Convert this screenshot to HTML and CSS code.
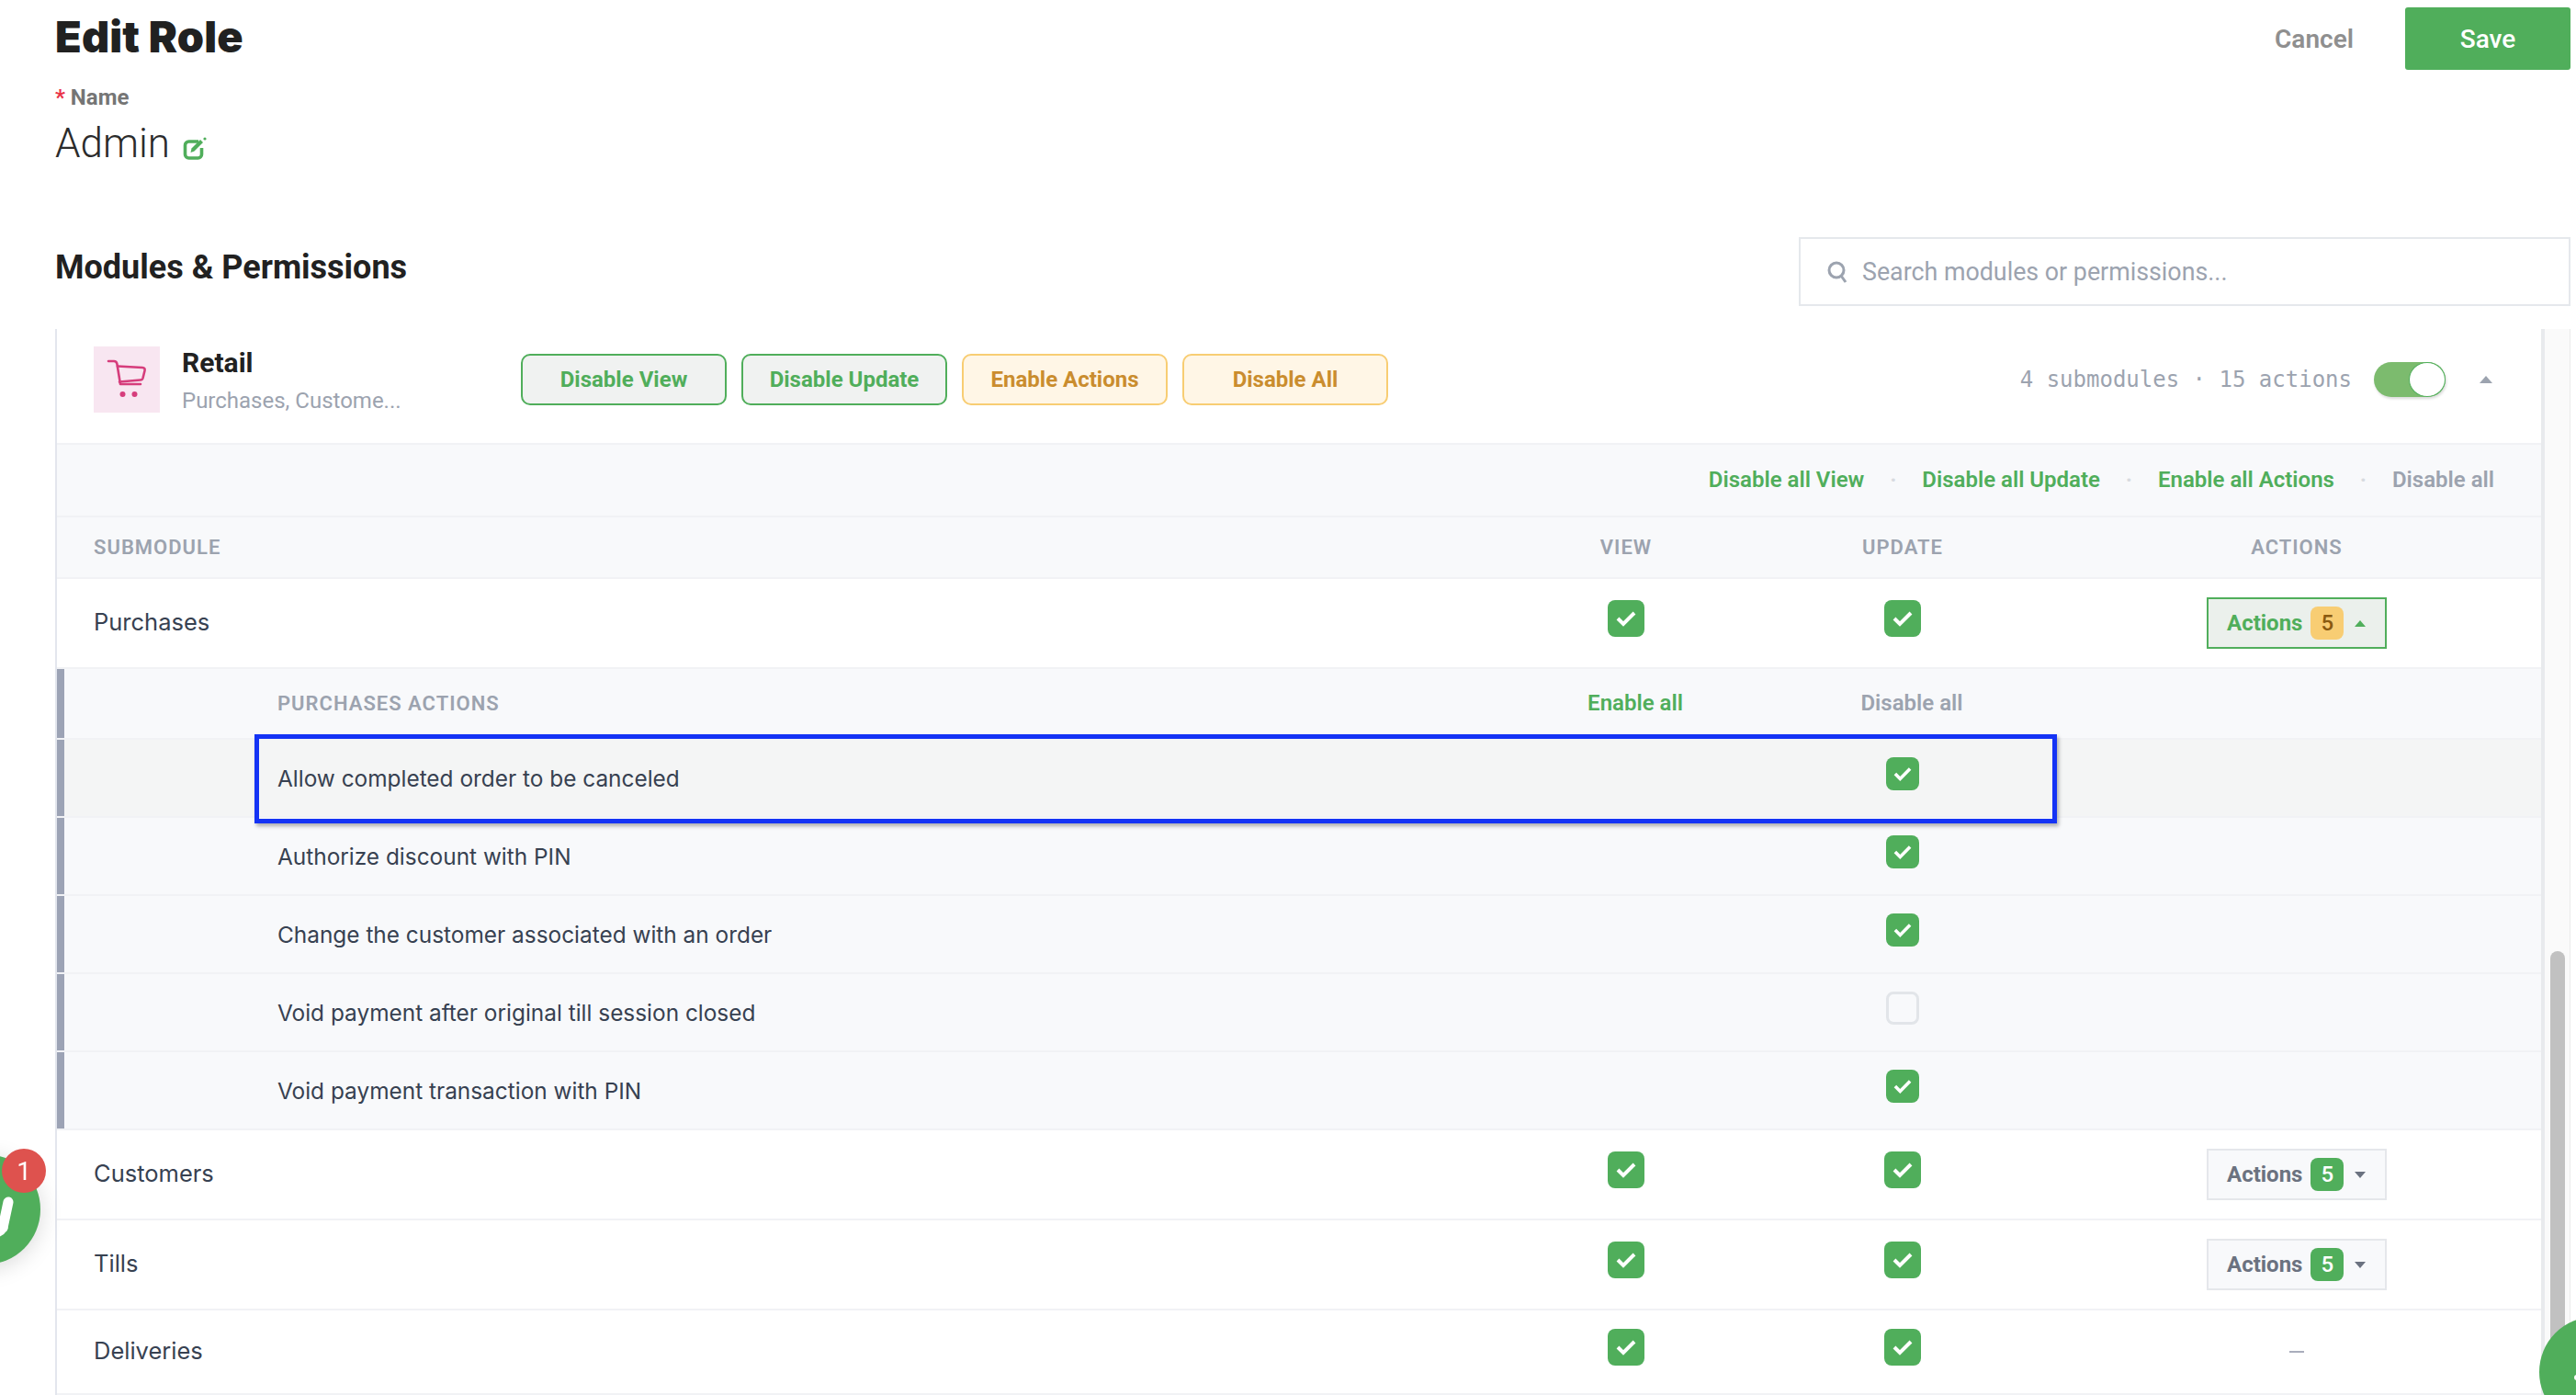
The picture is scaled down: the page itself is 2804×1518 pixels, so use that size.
FILE: index.html
```html
<!DOCTYPE html>
<html lang="en">
<head>
<meta charset="utf-8">
<title>Edit Role</title>
<link rel="stylesheet" href="styles.css">
</head>
<body>
<div class="page">
  <header class="top">
    <h1 class="title">Edit Role</h1>
    <div class="top-actions">
      <button class="cancel">Cancel</button>
      <button class="save">Save</button>
    </div>
  </header>
  <section class="name-block">
    <div class="name-label"><span class="req">*</span> Name</div>
    <div class="name-value">Admin
      <svg class="edit-icon" width="26" height="25" viewBox="0 0 26 25" fill="none"><path d="M17 5H6.500A4 4 0 0 0 2.500 9v10a4 4 0 0 0 4 4h10a4 4 0 0 0 4-4V12" stroke="#50ae5b" stroke-width="3.600"/><path d="M8.500 17l1-4.500L19 3l3 3-9.500 9.500z" fill="#50ae5b"/><circle cx="24" cy="2" r="1.600" fill="#50ae5b"/></svg>
    </div>
  </section>
  <section class="section-head">
    <h2 class="section-title">Modules &amp; Permissions</h2>
    <div class="search">
      <svg width="24" height="26" viewBox="0 0 24 26" fill="none" stroke="#9ca3af" stroke-width="3"><circle cx="11" cy="11" r="8"/><path d="M16 17l5 7"/></svg>
      <span>Search modules or permissions...</span>
    </div>
  </section>
  <div class="scroller">
    <main class="module">
      <div class="mod-head">
        <div class="mod-icon">
          <svg width="44" height="44" viewBox="0 0 44 44" fill="none" stroke="#d63d7c" stroke-width="2.600" stroke-linecap="round" stroke-linejoin="round"><path d="M2 2h6c2 0 3 1 3.400 3L15 27h22"/><path d="M12 7.500l27 1.500c2.300.2 3 1.500 2.500 3.500l-2 8c-.4 1.400-1.300 2-2.700 2L14 24.500"/><circle cx="17.500" cy="38" r="3" fill="#d63d7c" stroke="none"/><circle cx="30.500" cy="38" r="3" fill="#d63d7c" stroke="none"/></svg>
        </div>
        <div class="mod-info">
          <div class="mod-name">Retail</div>
          <div class="mod-sub">Purchases, Custome...</div>
        </div>
        <div class="mod-btns">
          <button class="pill green">Disable View</button>
          <button class="pill green">Disable Update</button>
          <button class="pill amber">Enable Actions</button>
          <button class="pill amber">Disable All</button>
        </div>
        <div class="mod-right">
          <span class="mod-count">4 submodules · 15 actions</span>
          <span class="toggle"><span class="knob"></span></span>
          <span class="caret up gray"></span>
        </div>
      </div>

      <div class="bulk">
        <span class="g">Disable all View</span><span class="dot">·</span>
        <span class="g">Disable all Update</span><span class="dot">·</span>
        <span class="g">Enable all Actions</span><span class="dot">·</span>
        <span class="m">Disable all</span>
      </div>

      <div class="grid col-head">
        <div class="c-name">SUBMODULE</div><div class="c">VIEW</div><div class="c">UPDATE</div><div class="c">ACTIONS</div>
      </div>

      <div class="grid row">
        <div class="c-name">Purchases</div>
        <div class="c"><span class="cb on"><svg width="24" height="20" viewBox="0 0 24 20"><path d="M3 10l6 6L21 4" fill="none" stroke="#fff" stroke-width="4"/></svg></span></div>
        <div class="c"><span class="cb on"><svg width="24" height="20" viewBox="0 0 24 20"><path d="M3 10l6 6L21 4" fill="none" stroke="#fff" stroke-width="4"/></svg></span></div>
        <div class="c"><button class="act open">Actions <span class="badge amber-b">5</span><span class="caret up greenc"></span></button></div>
      </div>

      <div class="grid sub-head">
        <div class="c-sub"><span class="bar"></span><span class="sh-label">PURCHASES ACTIONS</span></div>
        <div class="c shift g">Enable all</div>
        <div class="c shift m">Disable all</div>
        <div class="c"></div>
      </div>

      <div class="grid sub active">
        <div class="c-sub"><span class="bar"></span><span class="sub-label">Allow completed order to be canceled</span></div>
        <div class="c"></div>
        <div class="c"><span class="cb small on"><svg width="22" height="18" viewBox="0 0 24 20"><path d="M3 10l6 6L21 4" fill="none" stroke="#fff" stroke-width="4"/></svg></span></div>
        <div class="c"></div>
        <div class="highlight"></div>
      </div>
      <div class="grid sub">
        <div class="c-sub"><span class="bar"></span><span class="sub-label">Authorize discount with PIN</span></div>
        <div class="c"></div>
        <div class="c"><span class="cb small on"><svg width="22" height="18" viewBox="0 0 24 20"><path d="M3 10l6 6L21 4" fill="none" stroke="#fff" stroke-width="4"/></svg></span></div>
        <div class="c"></div>
      </div>
      <div class="grid sub">
        <div class="c-sub"><span class="bar"></span><span class="sub-label">Change the customer associated with an order</span></div>
        <div class="c"></div>
        <div class="c"><span class="cb small on"><svg width="22" height="18" viewBox="0 0 24 20"><path d="M3 10l6 6L21 4" fill="none" stroke="#fff" stroke-width="4"/></svg></span></div>
        <div class="c"></div>
      </div>
      <div class="grid sub">
        <div class="c-sub"><span class="bar"></span><span class="sub-label">Void payment after original till session closed</span></div>
        <div class="c"></div>
        <div class="c"><span class="cb small off"></span></div>
        <div class="c"></div>
      </div>
      <div class="grid sub">
        <div class="c-sub"><span class="bar"></span><span class="sub-label">Void payment transaction with PIN</span></div>
        <div class="c"></div>
        <div class="c"><span class="cb small on"><svg width="22" height="18" viewBox="0 0 24 20"><path d="M3 10l6 6L21 4" fill="none" stroke="#fff" stroke-width="4"/></svg></span></div>
        <div class="c"></div>
      </div>

      <div class="grid row">
        <div class="c-name">Customers</div>
        <div class="c"><span class="cb on"><svg width="24" height="20" viewBox="0 0 24 20"><path d="M3 10l6 6L21 4" fill="none" stroke="#fff" stroke-width="4"/></svg></span></div>
        <div class="c"><span class="cb on"><svg width="24" height="20" viewBox="0 0 24 20"><path d="M3 10l6 6L21 4" fill="none" stroke="#fff" stroke-width="4"/></svg></span></div>
        <div class="c"><button class="act">Actions <span class="badge">5</span><span class="caret down"></span></button></div>
      </div>
      <div class="grid row">
        <div class="c-name">Tills</div>
        <div class="c"><span class="cb on"><svg width="24" height="20" viewBox="0 0 24 20"><path d="M3 10l6 6L21 4" fill="none" stroke="#fff" stroke-width="4"/></svg></span></div>
        <div class="c"><span class="cb on"><svg width="24" height="20" viewBox="0 0 24 20"><path d="M3 10l6 6L21 4" fill="none" stroke="#fff" stroke-width="4"/></svg></span></div>
        <div class="c"><button class="act">Actions <span class="badge">5</span><span class="caret down"></span></button></div>
      </div>
      <div class="grid row short">
        <div class="c-name">Deliveries</div>
        <div class="c"><span class="cb on"><svg width="24" height="20" viewBox="0 0 24 20"><path d="M3 10l6 6L21 4" fill="none" stroke="#fff" stroke-width="4"/></svg></span></div>
        <div class="c"><span class="cb on"><svg width="24" height="20" viewBox="0 0 24 20"><path d="M3 10l6 6L21 4" fill="none" stroke="#fff" stroke-width="4"/></svg></span></div>
        <div class="c"><span class="dash"></span></div>
      </div>
    </main>
    <div class="track"><div class="thumb"></div></div>
  </div>
</div>

<div class="chat">
  <svg width="60" height="120" viewBox="0 0 60 120" fill="none"><path d="M25 52l-6 28" stroke="#fff" stroke-width="11" stroke-linecap="round"/><path d="M4 86c7 0 12-1 15-6" stroke="#fff" stroke-width="11" stroke-linecap="round"/></svg>
</div>
<div class="chat-badge">1</div>
<div class="help"><span class="help-dot"></span></div>
</body>
</html>
```
FILE: styles.css
```css
* { box-sizing: border-box; }
html, body { margin: 0; padding: 0; height: 100%; overflow: hidden; background: #fff; }
body { font-family: Roboto, "Liberation Sans", sans-serif; color: #222; }
button { font-family: inherit; cursor: pointer; }

.page { width: 2804px; height: 1518px; padding: 0 6px 0 60px; display: flex; flex-direction: column; overflow: hidden; }

.top { height: 84px; flex: none; display: flex; justify-content: space-between; align-items: flex-start; }
.title { margin: 0; font-family: Inter, sans-serif; font-weight: 900; font-size: 46.800px; line-height: 80px; letter-spacing: 0.2px; color: #212121; }
.top-actions { display: flex; align-items: center; gap: 56px; padding-top: 8px; }
.cancel { border: 0; background: none; padding: 0; font-size: 28px; font-weight: 600; color: #8f8f8f; }
.save { width: 180px; height: 68px; border: 0; border-radius: 3px; background: #50ae5b; color: #fff; font-size: 28px; font-weight: 500; }

.name-block { height: 174px; flex: none; padding-top: 8px; }
.name-label { font-size: 24px; line-height: 28px; font-weight: 700; color: #757575; }
.req { color: #ea3348; }
.name-value { margin-top: 2px; font-size: 44px; line-height: 68px; font-weight: 300; color: #2b2b2b; display: flex; align-items: center; gap: 14px; }
.edit-icon { margin-top: 10px; }

.section-head { height: 100px; flex: none; display: flex; justify-content: space-between; align-items: flex-start; }
.section-title { margin: 9px 0 0; font-size: 36px; line-height: 48px; font-weight: 700; color: #212121; }
.search { width: 840px; height: 75px; border: 2px solid #e5e8ec; padding-left: 28px; display: flex; align-items: center; gap: 15px; font-size: 26.800px; color: #9ca3af; }

.scroller { flex: 1; min-height: 0; display: flex; overflow: hidden; }
.module { width: 2710px; flex: none; border-left: 2px solid #e3e6ed; border-right: 4px solid #e8eaed; position: relative; font-size: 26px; }
.track { width: 28px; flex: none; background: #fafafa; border-right: 1px solid #ebebeb; padding: 677px 5px 0 6px; }
.thumb { height: 600px; border-radius: 8px 8px 0 0; background: #c1c1c1; }

.mod-head { height: 126px; padding: 0 53px 14px 40px; display: flex; align-items: center; border-bottom: 2px solid #f1f2f5; }
.mod-icon { width: 72px; height: 72px; flex: none; background: #f8e6f1; display: flex; align-items: center; justify-content: center; }
.mod-info { width: 393px; flex: none; padding: 2px 0 0 24px; }
.mod-name { font-size: 30px; line-height: 36px; font-weight: 700; color: #212121; }
.mod-sub { margin-top: 8px; font-size: 24px; line-height: 30px; color: #9ca3af; }
.mod-btns { display: flex; gap: 16px; }
.pill { width: 224px; height: 56px; border-radius: 10px; border: 2px solid; font-size: 24px; font-weight: 700; }
.pill.green { background: #f0f2f1; border-color: #50ae5b; color: #50ae5b; }
.pill.amber { background: #fff6e6; border-color: #f8cd73; color: #ca8d2e; }
.mod-right { margin-left: auto; display: flex; align-items: center; }
.mod-count { font-family: "DejaVu Sans Mono", monospace; font-size: 24px; color: #9ca3af; margin-right: 24px; }
.toggle { width: 78px; height: 38px; border-radius: 19px; background: #7cbb6e; display: flex; justify-content: flex-end; margin-right: 37px; box-shadow: 1px 2px 3px rgba(0,0,0,.15); }
.knob { width: 40px; height: 38px; border-radius: 50%; background: #fff; border: 1px solid #50ae5b; }

.caret { display: inline-block; width: 0; height: 0; border-left: 6px solid transparent; border-right: 6px solid transparent; }
.caret.up { border-bottom: 7px solid #6b7280; }
.caret.up.gray { border-left-width: 7px; border-right-width: 7px; border-bottom: 8px solid #9ca3af; }
.caret.up.greenc { border-bottom-color: #50ae5b; }
.caret.down { border-top: 7px solid #6b7280; }

.bulk { height: 79px; padding: 0 51px 2px 0; background: #f8f9fb; border-bottom: 2px solid #f1f2f5; display: flex; justify-content: flex-end; align-items: center; font-size: 24px; font-weight: 600; }
.g { color: #50ae5b; }
.m { color: #9ca3af; }
.dot { width: 63px; text-align: center; color: #d8dbe0; font-weight: 700; }

.grid { display: grid; grid-template-columns: 1570px 276px 326px 532px; align-items: center; position: relative; }
.c { display: flex; justify-content: center; align-items: center; }
.c-name { padding-left: 40px; }

.col-head { height: 67px; background: #f8f9fb; border-bottom: 2px solid #f1f2f5; font-size: 22px; font-weight: 600; letter-spacing: 1px; color: #9ca3af; }

.row { height: 98px; background: #fff; border-bottom: 2px solid #f1f2f5; color: #374151; }
.row .c-name { font-family: Inter, sans-serif; font-size: 25.500px; margin-top: -4px; }
.row.short { height: 92px; }

.cb { display: flex; align-items: center; justify-content: center; width: 40px; height: 40px; border-radius: 8px; margin-bottom: 10px; }
.cb.small { width: 36px; height: 36px; }
.cb.on { background: #50ae5b; }
.cb.off { border: 3px solid #e2e5e9; background: #f8f9fb; }

.act { width: 196px; height: 56px; padding: 0 0 0 20px; display: flex; align-items: center; justify-content: flex-start; background: #f8f9fb; border: 2px solid #e5e7eb; font-size: 24px; font-weight: 700; color: #6b7280; }
.act.open { background: #ebf0ec; border-color: #50ae5b; color: #50ae5b; font-weight: 700; }
.badge { width: 36px; height: 36px; margin: 0 12px 0 9px; border-radius: 8px; background: #50ae5b; color: #fff; font-weight: 500; display: flex; align-items: center; justify-content: center; }
.badge.amber-b { background: #f8cd73; color: #8a5a10; }
.dash { width: 16px; height: 2px; background: #a9adbc; }

.sub-head { height: 77px; background: #f8f9fb; border-bottom: 2px solid #f1f2f5; font-size: 24px; font-weight: 600; }
.sub { height: 85px; background: #f8f9fb; border-bottom: 2px solid #f1f2f5; }
.sub.active { background: #f4f5f5; }
.c-sub { height: 100%; display: flex; align-items: center; position: relative; padding-left: 240px; }
.bar { position: absolute; left: 0; top: 0; bottom: 0; width: 8px; background: #9ca3b5; }
.sh-label { font-size: 22px; font-weight: 600; letter-spacing: 1px; color: #9ca3af; }
.sub-label { font-family: Inter, sans-serif; font-size: 24.400px; color: #374151; }
.shift { padding-left: 20px; margin-top: -2px; }

.highlight { position: absolute; z-index: 3; left: 215px; top: -6px; width: 1962px; height: 97px; border: 5px solid #1433f5; box-shadow: 2px 3px 4px rgba(0,0,0,.3); }

.chat { position: fixed; left: -76px; top: 1256px; width: 120px; height: 120px; border-radius: 50%; background: #50ae5b; box-shadow: 0 4px 24px rgba(0,0,0,.15); display: flex; justify-content: flex-end; }
.chat svg { flex: none; }
.chat-badge { position: fixed; left: 2px; top: 1250px; width: 48px; height: 48px; border-radius: 50%; background: #de524e; color: #fff; font-size: 28px; display: flex; align-items: center; justify-content: center; }
.help { position: fixed; left: 2764px; top: 1433px; width: 120px; height: 120px; border-radius: 50%; background: #50ae5b; }
.help-dot { position: absolute; left: 38px; top: 63px; width: 6px; height: 6px; border-radius: 50%; background: #fff; }
```
